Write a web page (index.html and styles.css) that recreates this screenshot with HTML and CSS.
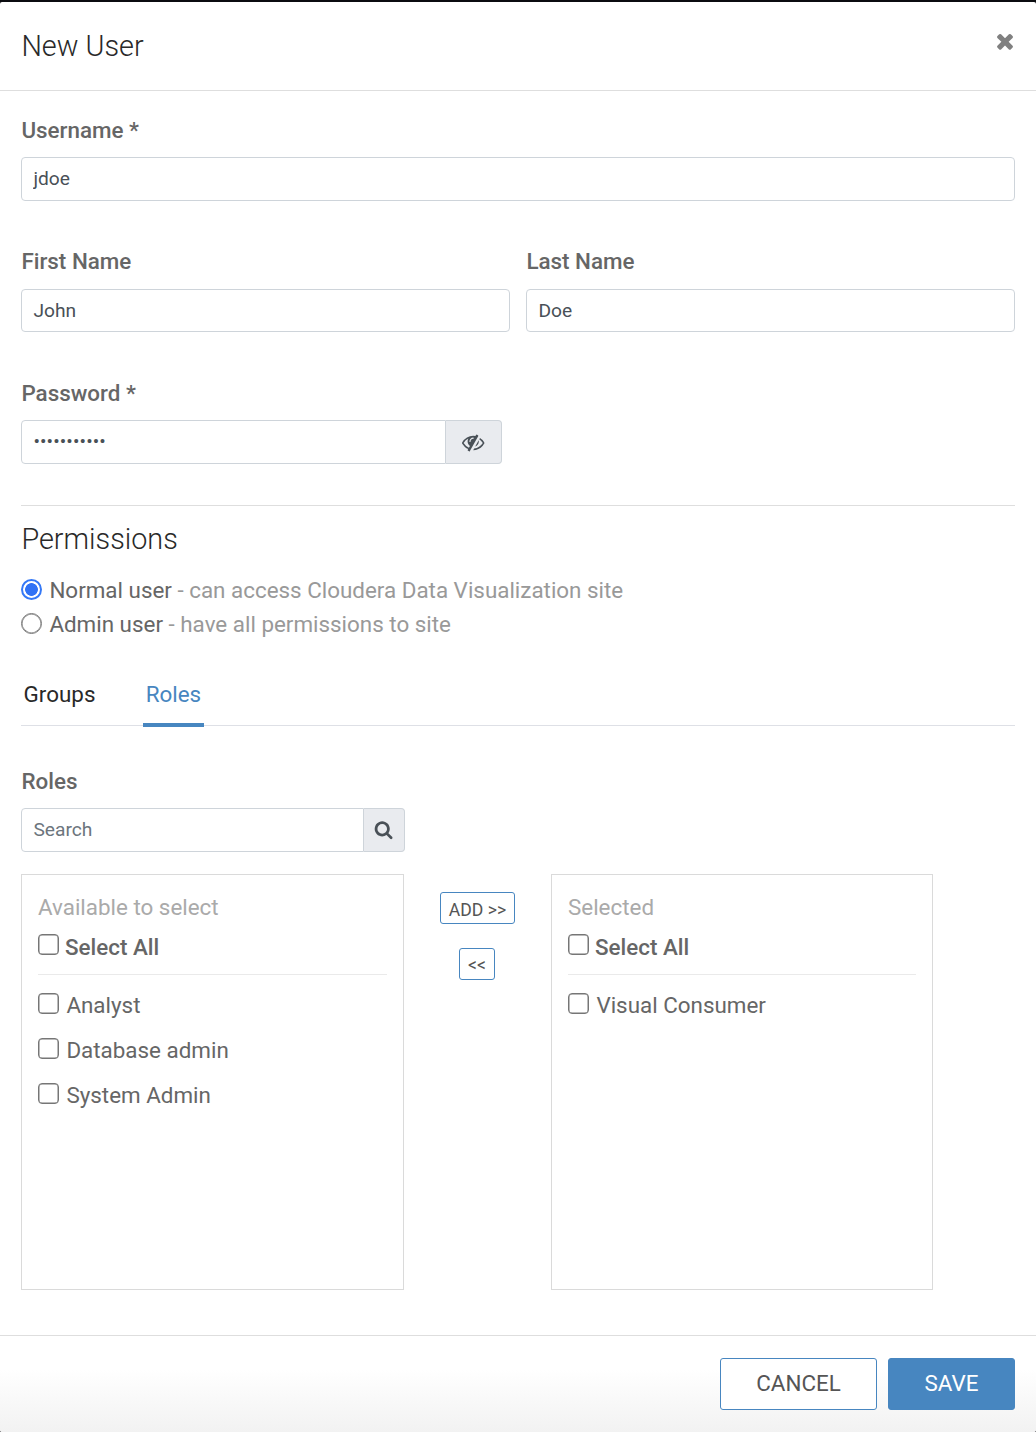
FILE: index.html
```html
<!DOCTYPE html>
<html lang="en">
<head>
<meta charset="utf-8">
<title>New User</title>
<link rel="stylesheet" href="styles.css">
</head>
<body>
<form class="modal">
  <header class="modal-header">
    <h1 class="title">New User</h1>
    <button type="button" class="close" aria-label="Close">
      <svg class="icon-close" viewBox="0 0 1792 1792"><path d="M1490 1322q0 40-28 68l-136 136q-28 28-68 28t-68-28l-294-294-294 294q-28 28-68 28t-68-28l-136-136q-28-28-28-68t28-68l294-294-294-294q-28-28-28-68t28-68l136-136q28-28 68-28t68 28l294 294 294-294q28-28 68-28t68 28l136 136q28 28 28 68t-28 68l-294 294 294 294q28 28 28 68z"/></svg>
    </button>
  </header>

  <main class="modal-body">
    <div class="field">
      <label class="label" for="username">Username *</label>
      <input class="input" id="username" type="text" value="jdoe">
    </div>
    <div class="field-row">
      <div class="field">
        <label class="label" for="first">First Name</label>
        <input class="input" id="first" type="text" value="John">
      </div>
      <div class="field">
        <label class="label" for="last">Last Name</label>
        <input class="input" id="last" type="text" value="Doe">
      </div>
    </div>
    <div class="field">
      <label class="label" for="password">Password *</label>
      <div class="input-group password-group">
        <input class="input password" id="password" type="password" value="password123">
        <button type="button" class="addon" aria-label="Show password">
          <svg class="icon-eye" viewBox="0 0 1792 1792"><path d="M555 1335l78-141q-87-63-136-159t-49-203q0-121 61-225-229 117-381 353 167 258 427 375zm389-759q0-20-14-34t-34-14q-125 0-214.5 89.5t-89.5 214.5q0 20 14 34t34 14 34-14 14-34q0-86 61-147t147-61q20 0 34-14t14-34zm363-191q0 7-1 9-106 189-316 567t-315 566l-49 89q-10 16-28 16-12 0-134-70-16-10-16-28 0-12 44-87-143-65-263.5-173t-208.5-245q-20-31-20-69t20-69q153-235 380-371t496-136q89 0 180 17l54-97q10-16 28-16 5 0 18 6t31 15.5 33 18.5 31.5 18.5 19.5 11.5q16 10 16 27zm37 447q0 139-79 253.5t-209 164.5l280-502q8 45 8 84zm448 128q0 35-20 69-39 64-109 145-150 172-347.5 267t-419.5 95l74-132q212-18 392.5-137t301.5-307q-115-179-282-294l63-112q95 64 182.5 153t144.5 184q20 34 20 69z"/></svg>
        </button>
      </div>
    </div>

    <section class="permissions">
      <h2 class="title">Permissions</h2>
      <label class="radio-line"><input class="radio" type="radio" name="kind" checked><span>Normal user <span class="hint">- can access Cloudera Data Visualization site</span></span></label>
      <label class="radio-line"><input class="radio" type="radio" name="kind"><span>Admin user <span class="hint">- have all permissions to site</span></span></label>
    </section>

    <nav class="tabs">
      <a class="tab">Groups</a>
      <a class="tab active">Roles</a>
    </nav>

    <label class="label" for="search">Roles</label>
    <div class="input-group search-group">
      <input class="input" id="search" type="text" placeholder="Search">
      <button type="button" class="addon" aria-label="Search">
        <svg class="icon-search" viewBox="0 0 1792 1792"><path d="M1216 832q0-185-131.5-316.5t-316.5-131.5-316.5 131.5-131.5 316.5 131.5 316.5 316.5 131.5 316.5-131.5 131.5-316.5zm512 832q0 52-38 90t-90 38q-54 0-90-38l-343-342q-179 124-399 124-143 0-273.5-55.5t-225-150-150-225-55.5-273.5 55.5-273.5 150-225 225-150 273.5-55.5 273.5 55.5 225 150 150 225 55.5 273.5q0 220-124 399l343 343q37 37 37 90z"/></svg>
      </button>
    </div>

    <div class="transfer">
      <section class="list">
        <div class="list-title">Available to select</div>
        <label class="check-line all"><input class="check" type="checkbox">Select All</label>
        <label class="check-line"><input class="check" type="checkbox">Analyst</label>
        <label class="check-line"><input class="check" type="checkbox">Database admin</label>
        <label class="check-line"><input class="check" type="checkbox">System Admin</label>
      </section>
      <div class="movers">
        <button type="button" class="mover">ADD &gt;&gt;</button>
        <button type="button" class="mover back">&lt;&lt;</button>
      </div>
      <section class="list selected">
        <div class="list-title">Selected</div>
        <label class="check-line all"><input class="check" type="checkbox">Select All</label>
        <label class="check-line"><input class="check" type="checkbox">Visual Consumer</label>
      </section>
    </div>
  </main>

  <footer class="modal-footer">
    <button type="button" class="btn cancel">CANCEL</button>
    <button type="button" class="btn save">SAVE</button>
  </footer>
</form>
</body>
</html>
```
FILE: styles.css
```css
* { box-sizing: border-box; }
body {
  margin: 0;
  background: #0b0c10;
  font-family: Roboto, sans-serif;
  font-size: 22.4px;
  color: #666;
}
button, input { font-family: inherit; margin: 0; }
svg { display: block; fill: currentColor; }

.modal {
  height: 1430px;
  margin-top: 2px;
  display: flex;
  flex-direction: column;
  background: #fff;
  border-radius: 2px;
  overflow: hidden;
}
.modal-header {
  height: 89px;
  padding: 26px 19px 0 21.4px;
  display: flex;
  justify-content: space-between;
  align-items: flex-start;
  border-bottom: 1px solid #dedede;
}
.title {
  margin: 0;
  font-size: 28.8px;
  line-height: 36px;
  font-weight: 300;
  color: #292929;
}
.close {
  margin-top: 1px;
  padding: 0;
  border: 0;
  background: none;
  color: #808080;
}
.icon-close { width: 24px; height: 24px; }

.modal-body { flex: 1; padding: 23px 21px 0; }
.field { display: flex; flex-direction: column; margin-bottom: 44px; }
.field-row { display: grid; grid-template-columns: 1fr 1fr; gap: 16px; }
.field-row .label { margin-bottom: 12px; }
.field-row .input { height: 43px; padding-bottom: 0; }
.field-row .field { margin-bottom: 45px; }
.label {
  display: block;
  margin-bottom: 11px;
  padding-left: 0.4px;
  line-height: 32px;
  font-weight: 500;
  color: #666;
}
.input {
  width: 100%;
  height: 44px;
  padding: 0 11.4px 2px;
  border: 1px solid #ced4da;
  border-radius: 4px;
  background: #fff;
  font-size: 19.2px;
  color: #495057;
  outline: 0;
}
.input.password { padding-bottom: 1px; letter-spacing: 0.12px; }
.input::placeholder { color: #6c757d; opacity: 1; }
.input-group { display: flex; }
.input-group .input { flex: 1; min-width: 0; border-radius: 4px 0 0 4px; }
.addon {
  display: flex;
  align-items: center;
  justify-content: center;
  padding: 0;
  border: 1px solid #ced4da;
  border-left: 0;
  border-radius: 0 4px 4px 0;
  background: #e9ebef;
  color: #495057;
}
.password-group { width: 481px; }
.password-group .addon { width: 56px; }
.icon-eye { width: 22.4px; height: 22.4px; }
.search-group { width: 384px; }
.search-group .addon { width: 41px; }
.icon-search { width: 19.2px; height: 19.2px; }

.permissions { border-top: 1px solid #dedede; margin-top: -3px; padding-top: 15px; }
.permissions .title { margin: 0 0.4px 16px; }
.radio-line { display: flex; align-items: center; gap: 7.4px; line-height: 34px; }
.hint { color: #999; }
.radio {
  appearance: none;
  width: 21px;
  height: 21px;
  margin-top: -2px;
  border: 1px solid #767676;
  border-radius: 50%;
  background: #fff;
  box-shadow: inset 0 0 0 0.5px #767676;
}
.radio:checked {
  border: 2px solid #3478f6;
  background: radial-gradient(circle, #3072f5 6px, #fff 6.7px);
  box-shadow: none;
}

.tabs {
  display: flex;
  gap: 45px;
  height: 50px;
  margin: 35px 0 39px;
  border-bottom: 1px solid #dee0e6;
}
.tab { height: 51px; padding: 0 2.6px; line-height: 36px; color: #292929; }
.tab.active { color: #4786c0; border-bottom: 4px solid #4786c0; }

.transfer { display: flex; margin-top: 22px; }
.list {
  width: 383px;
  height: 416px;
  padding: 16px;
  border: 1px solid #dadada;
}
.list.selected { width: 382px; }
.list-title { line-height: 32px; color: #aaa; }
.check-line { display: flex; align-items: center; gap: 7.4px; height: 45px; padding-bottom: 2px; }
.check-line .check { margin-top: -2px; }
.check-line.all {
  gap: 6px;
  height: 52px;
  padding-bottom: 4px;
  margin-bottom: 8px;
  border-bottom: 1px solid #eaeaea;
  font-weight: 500;
}
.check-line.all .check { margin-top: -4px; }
.check {
  appearance: none;
  width: 21px;
  height: 21px;
  border: 1px solid #767676;
  border-radius: 4px;
  background: #fff;
  box-shadow: inset 0 0 0 0.5px #767676;
}
.movers {
  width: 147px;
  padding-top: 18px;
  display: flex;
  flex-direction: column;
  align-items: center;
  gap: 24px;
}
.mover {
  height: 32px;
  padding: 4px 8px 0;
  border: 1px solid #4786c0;
  border-radius: 3px;
  background: #fff;
  font-size: 17.6px;
  color: #555;
}
.mover.back { width: 36px; margin-right: 1px; padding-top: 2px; }

.modal-footer {
  height: 97px;
  padding: 22px 21px 0;
  display: flex;
  justify-content: flex-end;
  gap: 11px;
  border-top: 1px solid #dedede;
  background: linear-gradient(#fff 35%, #f2f2f2);
}
.btn {
  height: 52px;
  padding: 0 0 2px;
  border: 1px solid #4786c0;
  border-radius: 3px;
  font-size: 22.4px;
}
.cancel { width: 157px; background: #fff; color: #555; }
.save { width: 127px; background: #4786c0; color: #fff; }
```
